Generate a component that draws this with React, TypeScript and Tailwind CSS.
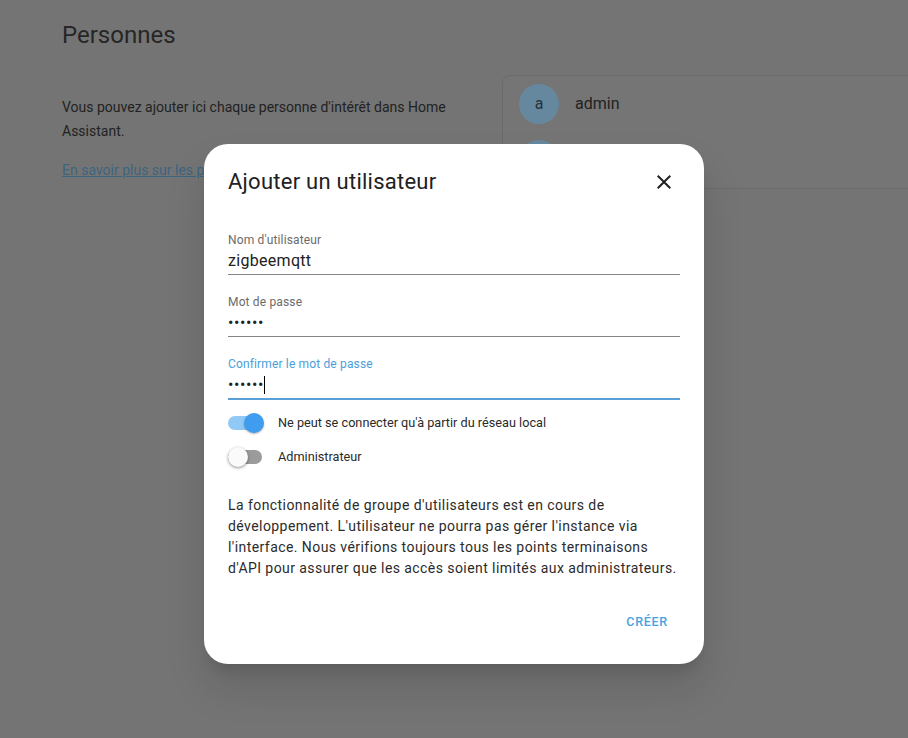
import React from "react";

const font = { fontFamily: "Roboto, 'Noto Sans', sans-serif" };

function Field({
  label,
  value,
  focused = false,
  password = false,
}: {
  label: string;
  value: string;
  focused?: boolean;
  password?: boolean;
}) {
  return (
    <div className="flex flex-col">
      <div
        className={`h-[16px] text-[12px] leading-[16px] tracking-[0.15px] ${
          focused ? "text-[#4a9edb]" : "text-[#6b6b6b]"
        }`}
      >
        {label}
      </div>
      <div className="h-[26px] flex items-center text-[16px] tracking-[0.3px] text-[#212121]">
        {password ? (
          <span className="tracking-[0.6px] text-[16px]">{value}</span>
        ) : (
          <span>{value}</span>
        )}
        {focused && <span className="w-px h-[18px] bg-black" />}
      </div>
      {focused ? (
        <div className="h-[2px] bg-[#5a9fd6]" />
      ) : (
        <div className="h-px bg-[#858585]" />
      )}
    </div>
  );
}

function Toggle({ on, label }: { on: boolean; label: string }) {
  return (
    <div className="h-[24px] flex items-center">
      <div className="relative w-[36px] h-[24px] flex items-center">
        <div
          className={`w-[34px] h-[14px] rounded-full ${
            on ? "bg-[#90c8f6]" : "bg-[#9b9b9b]"
          }`}
        />
        <div
          className={`absolute top-[2px] w-[20px] h-[20px] rounded-full ${
            on
              ? "left-[16px] bg-[#3f9cef] shadow-[0_1px_2px_rgba(0,0,0,0.3)]"
              : "left-0 bg-[#fafafa] shadow-[0_1px_3px_rgba(0,0,0,0.45)]"
          }`}
        />
      </div>
      <span className="ml-[14px] text-[12.7px] text-[#2a2a2a]">{label}</span>
    </div>
  );
}

export default function App() {
  return (
    <div
      className="relative w-[908px] h-[738px] overflow-hidden bg-[#747474]"
      style={font}
    >
      {/* dimmed page behind the dialog */}
      <div className="pl-[62px] pt-[19px] h-[51px] text-[24px] leading-[32px] text-[#262626]">
        Personnes
      </div>
      <div className="flex mt-[24px]">
        <div className="w-[470px] shrink-0 pl-[62px] pr-[6px] pt-[20px] text-[14px] leading-[24px] text-[#222]">
          <p>
            Vous pouvez ajouter ici chaque personne d'intérêt dans Home
            Assistant.
          </p>
          <p className="mt-[15px]">
            <a className="underline text-[#3d6480]">En savoir plus sur les p</a>
          </p>
        </div>
        <div className="ml-[32px] w-[460px] shrink-0 h-[114px] rounded-l-[8px] border border-[#6b6b6b] bg-[#757575] flex flex-col">
          <div className="h-[56px] flex items-center pl-[16px]">
            <div className="w-[40px] h-[40px] rounded-full bg-[#66889f] flex items-center justify-center text-[16px] text-[#26323b]">
              a
            </div>
            <span className="ml-[16px] text-[16px] text-[#222]">admin</span>
          </div>
          <div className="h-[56px] flex items-center pl-[16px]">
            <div className="w-[40px] h-[40px] rounded-full bg-[#66889f]" />
          </div>
        </div>
      </div>

      {/* dialog */}
      <div className="absolute inset-0 flex justify-center items-start pt-[144px]">
        <div className="w-[500px] h-[520px] bg-white rounded-[24px] shadow-[0_11px_15px_-7px_rgba(0,0,0,0.15),0_24px_38px_3px_rgba(0,0,0,0.1)] flex flex-col">
          <div className="flex items-center justify-between pl-[24px] pr-[28px] pt-[22px]">
            <h2 className="text-[22px] leading-[32px] tracking-[0.25px] text-[#212121]">
              Ajouter un utilisateur
            </h2>
            <svg width="24" height="24" viewBox="0 0 24 24" className="text-[#212121]">
              <path
                fill="currentColor"
                d="M19,6.41L17.59,5L12,10.59L6.41,5L5,6.41L10.59,12L5,17.59L6.41,19L12,13.41L17.59,19L19,17.59L13.41,12L19,6.41Z"
              />
            </svg>
          </div>

          <div className="px-[24px] mt-[34px] flex flex-col gap-[19px]">
            <Field label="Nom d'utilisateur" value="zigbeemqtt" />
            <Field label="Mot de passe" value="••••••" password />
            <Field
              label="Confirmer le mot de passe"
              value="••••••"
              password
              focused
            />
          </div>

          <div className="px-[24px] mt-[11px] flex flex-col gap-[10px]">
            <Toggle on label="Ne peut se connecter qu'à partir du réseau local" />
            <Toggle on={false} label="Administrateur" />
          </div>

          <p className="px-[24px] mt-[26px] text-[14px] leading-[21px] tracking-[0.43px] text-[#2b2b2b]">
            La fonctionnalité de groupe d'utilisateurs est en cours de
            développement. L'utilisateur ne pourra pas gérer l'instance via
            l'interface. Nous vérifions toujours tous les points terminaisons
            d'API pour assurer que les accès soient limités aux administrateurs.
          </p>

          <div className="mt-auto mb-[24px] flex justify-end pr-[28px]">
            <button className="h-[36px] px-[8px] text-[12.5px] font-medium tracking-[0.06em] text-[#4aa2df]">
              CRÉER
            </button>
          </div>
        </div>
      </div>
    </div>
  );
}
